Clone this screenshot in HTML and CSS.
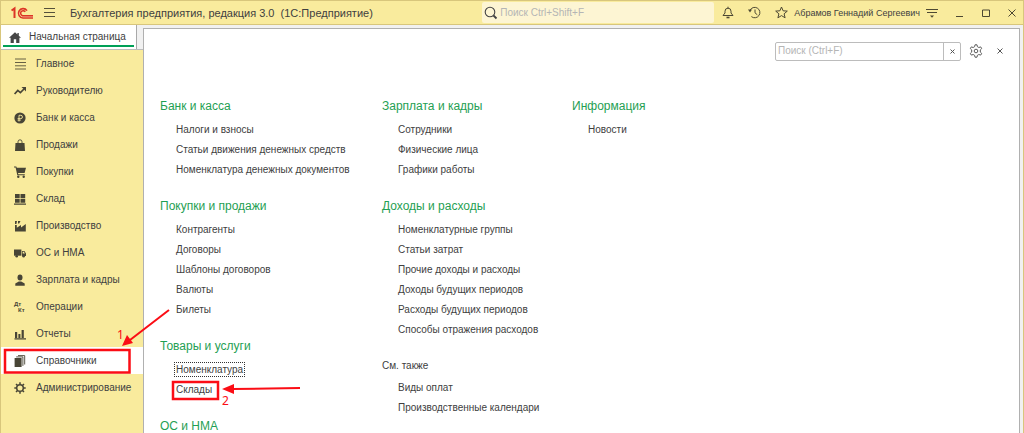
FILE: index.html
```html
<!DOCTYPE html>
<html lang="ru">
<head>
<meta charset="utf-8">
<title>Бухгалтерия предприятия, редакция 3.0</title>
<link rel="stylesheet" href="styles.css">
</head>
<body>
<div class="window">
  <header class="titlebar">
    <svg class="logo" width="24" height="14" viewBox="0 0 24 14" fill="none" stroke="#dc3526">
      <path d="M.5 4.500 3.500 2.400V12" stroke-width="2"/>
      <path d="M16 4.600A4.700 4.700 0 1 0 12 12H22" stroke-width="1.600"/>
      <path d="M14.200 5.800A2.500 2.500 0 1 0 12 9.700H22" stroke-width="1.500"/>
      <path d="M11 10.800h11" stroke="#e8705a"/>
    </svg>
    <button class="icon-btn" aria-label="Меню"><svg width="12" height="11" viewBox="0 0 12 11" stroke="#55503a"><path d="M0 1.5h11M0 5.5h11M0 9.5h11"/></svg></button>
    <h1 class="app-title">Бухгалтерия предприятия, редакция 3.0 &nbsp;(1С:Предприятие)</h1>
    <label class="global-search">
      <svg width="14" height="14" viewBox="0 0 14 14" fill="none" stroke="#444"><circle cx="6" cy="6" r="4.8" stroke-width="1.1"/><path d="m9.5 9.5 3 3" stroke-width="1.8"/></svg>
      <input type="text" placeholder="Поиск Ctrl+Shift+F" aria-label="Глобальный поиск">
    </label>
    <div class="tools">
      <button class="icon-btn" aria-label="Уведомления"><svg width="12" height="13" viewBox="0 0 12 13" fill="none" stroke="#4d4833"><path d="M1 9.5h10L9 7V5.2a3 3 0 0 0-6 0V7zM6 .7v1.5"/><path d="M4.5 11.5h3" stroke-width="1.6"/></svg></button>
      <button class="icon-btn" aria-label="История"><svg width="13" height="13" viewBox="0 0 13 13" fill="none" stroke="#4d4833"><path d="M2 4.3A5.2 5.2 0 1 1 3.4 10.600M7 3.500v3.300l2.300 2"/><path d="M0 3.500h4L2 6.500z" fill="#4d4833" stroke="none"/></svg></button>
      <button class="icon-btn" aria-label="Избранное"><svg width="13" height="13" viewBox="0 0 13 13" fill="none" stroke="#4d4833"><path d="m6.500 1 1.600 3.800 4.200.3L9.100 7.800l1 4-3.600-2.200-3.600 2.200 1-4L.7 5.100l4.200-.3z"/></svg></button>
    </div>
    <button class="user">Абрамов Геннадий Сергеевич</button>
    <div class="win-buttons">
      <button class="icon-btn" aria-label="Настройки"><svg width="12" height="12" viewBox="0 0 12 12" stroke="#4d4833"><path d="M0 2.500h12M1 5.500h10"/><path d="M4 8.500h4L6 10.800z" fill="#4d4833" stroke="none"/></svg></button>
      <button class="icon-btn" aria-label="Свернуть"><svg width="8" height="10" viewBox="0 0 8 10" stroke="#4d4833"><path d="M0 8.500h7"/></svg></button>
      <button class="icon-btn" aria-label="Развернуть"><svg width="8" height="8" viewBox="0 0 8 8" fill="none" stroke="#4d4833"><path d="M.5 1h7v6.500h-7z"/></svg></button>
      <button class="icon-btn" aria-label="Закрыть"><svg width="8" height="8" viewBox="0 0 8 8" stroke="#4d4833"><path d="m.5.5 7 7m0-7-7 7"/></svg></button>
    </div>
  </header>

  <div class="body">
    <aside class="side">
      <div class="tabs">
        <a class="tab" href="#">
          <svg width="12" height="11" viewBox="0 0 12 11" fill="#454545"><path d="M6 .3 0 5.800h1.600V11h3.200V7.200h2.400V11h3.200V5.800H12L9.800 3.700V1H8.400v1.500z"/></svg>
          Начальная страница</a>
      </div>
      <nav class="menu">
        <a href="#"><svg viewBox="0 0 12 12" stroke="#55503a"><path d="M1 1h11M1 4.500h11M1 7.800h11M1 11h11" stroke-width=".9"/></svg>Главное</a>
        <a href="#"><svg viewBox="0 0 12 12"><path d="m.6 9 3.200-3.600 2.600 2.200L10 4" fill="none" stroke="#484536" stroke-width="1.700"/><path d="M7.500 2H12v4.500z"/></svg>Руководителю</a>
        <a href="#"><svg viewBox="0 0 12 12"><circle cx="6" cy="6" r="5.600"/><path d="M5 9.500V3.300h1.800a1.600 1.600 0 0 1 0 3.300H3.600M3.600 8.100h3.200" fill="none" stroke="#f9eb9d" stroke-width=".9"/></svg>Банк и касса</a>
        <a href="#"><svg viewBox="0 0 12 12"><path d="M1.500 4h9l.5 8H1z"/><path d="M4 5.500V2.800a2 2 0 0 1 4 0v2.700" fill="none" stroke="#484536" stroke-width=".9"/></svg>Продажи</a>
        <a href="#"><svg viewBox="0 0 12 12"><path d="M0 .5h2.300l.5 1.300H12L10.600 7H4l.3 1.200h6.500v1H3.300L1.600 1.600H0z"/><circle cx="4.300" cy="10.700" r="1.200"/><circle cx="9.700" cy="10.700" r="1.200"/></svg>Покупки</a>
        <a href="#"><svg viewBox="0 0 12 12"><path d="M1 1h4.700v4.200H1zM6.500 1h4.700v4.200H6.500zM1 6h4.700v3.800H1zM6.500 6h4.700v3.800H6.500zM0 10.500h12v1.300H0z"/></svg>Склад</a>
        <a href="#"><svg viewBox="0 0 12 12"><path d="M1 11.500V5h1.800v2.800L7 5v2.500L11.800 4v7.500zM1 1h2l-.6 3H1zM4 1h2.500L5.200 3.500H4z"/></svg>Производство</a>
        <a href="#"><svg viewBox="0 0 12 12"><path d="M0 2.500h7.400v6.200H0z"/><path d="M8 4h2.400L12 6.500v2.400H8zM8.700 4.800v1.700h2.200l-1-1.700z" fill-rule="evenodd"/><circle cx="2.700" cy="9.300" r="1.300"/><circle cx="9.600" cy="9.300" r="1.300"/></svg>ОС и НМА</a>
        <a href="#"><svg viewBox="0 0 12 12"><ellipse cx="6" cy="3.400" rx="2.500" ry="3"/><path d="M1.300 11.700V9.500L4.800 7.500h2.400l3.500 2v2.200z"/></svg>Зарплата и кадры</a>
        <a href="#"><svg viewBox="0 0 12 12"><g class="dk"><text x="0" y="5">Дт</text><text x="4" y="11">Кт</text></g></svg>Операции</a>
        <a href="#"><svg viewBox="0 0 12 12"><path d="M1 4h2.200v6H1zM4.400 6h2v4h-2zM7.600 2h2.200v8H7.600zM.5 10.200H12v1.200H.5z"/></svg>Отчеты</a>
        <a class="active" href="#" aria-current="page"><svg viewBox="0 0 12 12"><path d="M.6 3h7v9h-7z"/><path d="M2.200 1.900h6.700v9M4 .6h6.700V9.500" fill="none" stroke="#484536" stroke-width=".9"/></svg>Справочники</a>
        <a href="#"><svg viewBox="0 0 12 12" stroke="#484536"><circle cx="6" cy="6" r="3.300" fill="none" stroke-width="1.500"/><path d="M6 .3v2M6 9.700v2M.3 6h2M9.700 6h2M2 2l1.300 1.300M8.700 8.700 10 10M2 10l1.300-1.300M8.700 3.300 10 2" stroke-width="1.500"/></svg>Администрирование</a>
      </nav>
    </aside>

    <main class="panel">
      <div class="panel-tools">
        <div class="local-search">
          <input type="text" placeholder="Поиск (Ctrl+F)" aria-label="Поиск">
          <button aria-label="Очистить"><svg width="5" height="5" viewBox="0 0 5 5" stroke="#555"><path d="m.5.500 4 4m0-4-4 4"/></svg></button>
        </div>
        <button class="icon-btn" aria-label="Настройка"><svg width="14" height="14" viewBox="0 0 14 14" fill="none" stroke="#5c5c5c"><path d="M5.600 2.700 6 .8h2l.4 1.900 1.400.8 1.900-.6 1 1.700-1.400 1.300v2.200l1.400 1.300-1 1.700-1.900-.6-1.400.8-.4 1.900H6l-.4-1.900-1.400-.8-1.900.6-1-1.700 1.400-1.300V5.900L1.300 4.600l1-1.700 1.900.6z"/><circle cx="7" cy="7" r="1.800"/></svg></button>
        <button class="icon-btn" aria-label="Закрыть панель"><svg width="6" height="6" viewBox="0 0 6 6" stroke="#555"><path d="m.5.500 5 5m0-5-5 5"/></svg></button>
      </div>
      <div class="columns">
        <div class="column">
          <section><h2>Банк и касса</h2><ul>
            <li><a href="#">Налоги и взносы</a></li>
            <li><a href="#">Статьи движения денежных средств</a></li>
            <li><a href="#">Номенклатура денежных документов</a></li></ul></section>
          <section><h2>Покупки и продажи</h2><ul>
            <li><a href="#">Контрагенты</a></li>
            <li><a href="#">Договоры</a></li>
            <li><a href="#">Шаблоны договоров</a></li>
            <li><a href="#">Валюты</a></li>
            <li><a href="#">Билеты</a></li></ul></section>
          <section><h2>Товары и услуги</h2><ul>
            <li><a class="focused" href="#">Номенклатура</a></li>
            <li><a href="#">Склады</a></li></ul></section>
          <section><h2>ОС и НМА</h2></section>
        </div>
        <div class="column">
          <section><h2>Зарплата и кадры</h2><ul>
            <li><a href="#">Сотрудники</a></li>
            <li><a href="#">Физические лица</a></li>
            <li><a href="#">Графики работы</a></li></ul></section>
          <section><h2>Доходы и расходы</h2><ul>
            <li><a href="#">Номенклатурные группы</a></li>
            <li><a href="#">Статьи затрат</a></li>
            <li><a href="#">Прочие доходы и расходы</a></li>
            <li><a href="#">Доходы будущих периодов</a></li>
            <li><a href="#">Расходы будущих периодов</a></li>
            <li><a href="#">Способы отражения расходов</a></li></ul></section>
          <section class="see-also"><h2>См. также</h2><ul>
            <li><a href="#">Виды оплат</a></li>
            <li><a href="#">Производственные календари</a></li></ul></section>
        </div>
        <div class="column">
          <section><h2>Информация</h2><ul>
            <li><a href="#">Новости</a></li></ul></section>
        </div>
      </div>
    </main>
  </div>

  <svg class="marks" width="310" height="433" viewBox="0 0 310 433" fill="none" stroke="#fb0d15" stroke-width="2">
    <rect x="5" y="350" width="124.500" height="22.500" stroke-width="2.500"/>
    <rect x="173" y="382" width="45" height="17" stroke-width="2.500"/>
    <path d="M169 310 130 340M300 388 232 389"/>
    <path d="m122 346 5-11 6 8zM222 389l12-5v10z" fill="#fb0d15" stroke="none"/>
    <text x="117" y="339">1</text>
    <text x="222" y="405">2</text>
  </svg>
</div>
</body>
</html>
```
FILE: styles.css
```css
* { box-sizing: border-box; }

body {
  margin: 0;
  font: 10px/20px "Liberation Sans", Arial, sans-serif;
  color: #404040;
}

a { color: inherit; text-decoration: none; }
button, input { font: inherit; color: inherit; border: 0; padding: 0; background: none; }
input { min-width: 0; outline: 0; }
input::placeholder { color: #b5b5b5; opacity: 1; }
svg { display: block; flex: none; }

.window {
  position: relative;
  display: flex;
  flex-direction: column;
  min-height: 100vh;
  border-left: 1px solid #d8c67c;
  border-right: 1px solid #d8c67c;
  background: #f1f1f1;
}

.titlebar {
  display: flex;
  align-items: center;
  height: 25px;
  padding: 0 7px 0 10px;
  background: #f9eb9d;
  border-top: 1px solid #d8c67c;
  border-bottom: 1px solid #d8c67c;
}

.icon-btn { display: flex; align-items: center; justify-content: center; }
.logo { margin-right: 9px; }
.app-title { margin: 0 auto 0 14px; font-size: 11px; font-weight: normal; white-space: nowrap; }

.global-search {
  display: flex;
  align-items: center;
  gap: 2px;
  flex: 0 0 232px;
  height: 21px;
  padding-left: 2px;
  border-radius: 2px;
  background: #fdf5d3;
}
.global-search input { flex: 1; }

.tools { display: flex; align-items: center; gap: 14px; margin-left: 8px; }
.user { margin-left: 6px; font-size: 9px; white-space: nowrap; }
.win-buttons { display: flex; align-items: center; gap: 18px; margin-left: 6px; }

.body { display: flex; flex: 1; }

.side { display: flex; flex-direction: column; flex: 0 0 142px; }
.tabs {
  height: 25px;
  padding-right: 6px;
  border-bottom: 1px solid #bdbdbd;
}
.tab {
  display: flex;
  align-items: center;
  gap: 8px;
  height: 24px;
  padding-left: 8px;
  background: linear-gradient(#00a057, #00a057) 2px 20px / 131px 2px no-repeat #fff;
  border-right: 1px solid #a9a9a9;
  white-space: nowrap;
}

.menu { flex: 1; background: #f9eb9d; }
.menu a {
  display: flex;
  align-items: center;
  gap: 10px;
  height: 27px;
  padding: 1px 0 0 13px;
  white-space: nowrap;
}
.menu svg { width: 12px; height: 12px; fill: #484536; overflow: visible; }
.menu .active { background: #fff; }
.dk { font-size: 6px; font-weight: bold; }

.panel {
  flex: 1;
  margin: 3px 3px 0 0;
  padding: 12px 16px 0;
  background: #fff;
  border: 1px solid #b0b0b0;
  border-bottom: 0;
}

.panel-tools { display: flex; align-items: center; justify-content: flex-end; gap: 8px; height: 20px; }
.panel-tools > .icon-btn:last-child { margin-left: 6px; }
.local-search {
  display: flex;
  width: 186px;
  height: 19px;
  border: 1px solid #bcbcbc;
  border-radius: 2px;
}
.local-search input { flex: 1; padding-left: 2px; }
.local-search button {
  display: flex;
  align-items: center;
  justify-content: center;
  width: 17px;
  border-left: 1px solid #bcbcbc;
}

.columns { display: grid; grid-template-columns: 222px 190px 1fr; margin-top: 33px; }
.column { display: flex; flex-direction: column; gap: 14px; }

h2 { margin: 0 0 1px; font-size: 12px; line-height: 25px; font-weight: normal; color: #1fa053; }
.see-also h2 { margin: 0; font-size: 10px; line-height: 24px; color: inherit; }
ul { margin: 0; padding: 0 0 0 16px; list-style: none; }
li { height: 20px; white-space: nowrap; }
.focused { outline: 1px dotted #333; outline-offset: 1px; }

.marks { position: absolute; top: 0; left: -1px; pointer-events: none; }
.marks text { font: 12px "Noto Sans", sans-serif; fill: #fb0d15; stroke: none; }
```
